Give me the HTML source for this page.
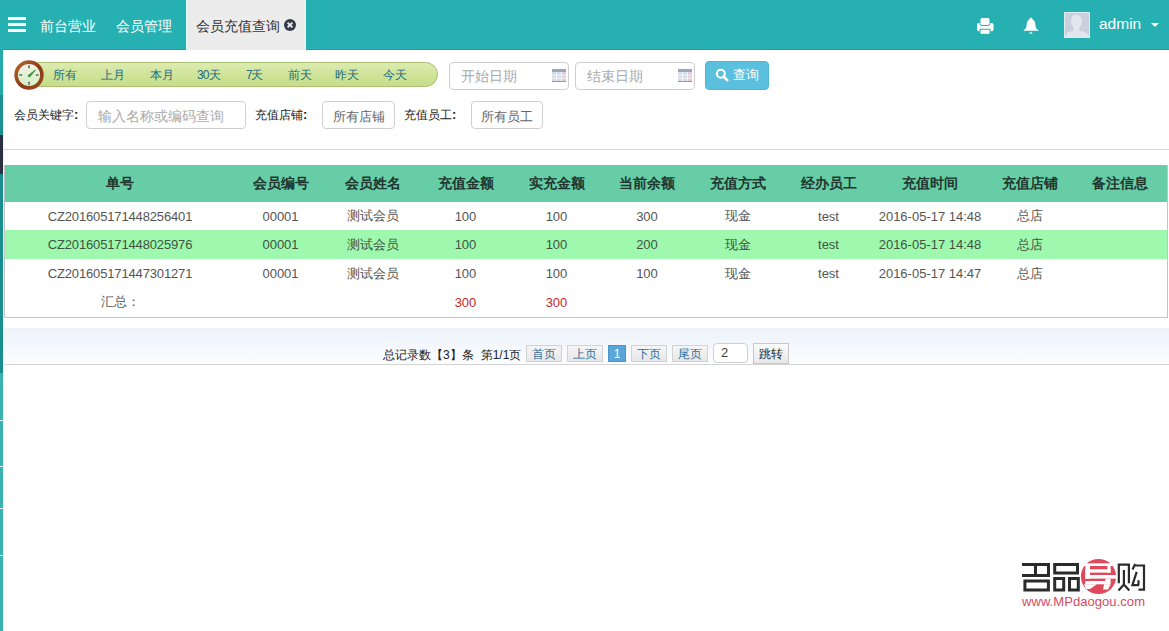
<!DOCTYPE html>
<html><head><meta charset="utf-8">
<style>
*{margin:0;padding:0;box-sizing:border-box;}
html,body{width:1169px;height:631px;overflow:hidden;background:#fff;font-family:"Liberation Sans",sans-serif;color:#333;}
.abs{position:absolute;}
#top{position:absolute;left:0;top:0;width:1169px;height:50px;background:#26b0b2;box-shadow:inset 0 -1px #20a0a2;}
.ham{position:absolute;left:8px;width:18px;height:3px;background:#fff;}
.nav{position:absolute;top:18px;font-size:14px;color:#fff;line-height:16px;white-space:nowrap;}
#tab{position:absolute;left:186px;top:0;width:120px;height:50px;background:#ececec;border-left:1px solid #dff;border-right:1px solid #dff;}
.pill{position:absolute;left:24px;top:62px;width:414px;height:25px;border:1px solid #aabd72;border-radius:13px;background:linear-gradient(#dcebb0,#cfe49a 50%,#c4de88);}
.q{position:absolute;top:68px;font-size:12px;color:#216a84;line-height:14px;white-space:nowrap;}
.inp{position:absolute;height:28px;border:1px solid #cfcfcf;border-radius:4px;background:#fff;}
.ph{position:absolute;font-size:14px;color:#aaa;line-height:16px;white-space:nowrap;}
.lbl{position:absolute;font-size:12px;color:#222;line-height:14px;white-space:nowrap;}
.btn{position:absolute;height:28px;border:1px solid #cfcfcf;border-radius:4px;background:#fff;font-size:13px;color:#666;text-align:center;line-height:29px;white-space:nowrap;}
table{position:absolute;left:5px;top:165px;width:1162px;border-collapse:separate;border-spacing:0;table-layout:fixed;}
th{height:37px;background:#66cda7;font-size:14px;font-weight:bold;color:#21362e;text-align:center;padding:0;padding-top:1px;}
td{font-size:13px;color:#555;text-align:center;padding:0;white-space:nowrap;}
tr.g td{background:#9ef9ae;color:#3f5443;}
.red{color:#c4262e;}
#pager{position:absolute;left:4px;top:328px;width:1165px;height:37px;background:linear-gradient(#eff3f7,#f0f5fc 25%,#fcfdff);border-bottom:1px solid #d4d4d4;}
.pg{position:absolute;top:345px;height:17px;border:1px solid #d2d2d2;background:linear-gradient(#f6f6f6,#e6e6e6);font-size:12px;color:#2f6e9a;line-height:16px;text-align:center;}
</style></head><body>
<div id="top">
  <div class="ham" style="top:17px"></div>
  <div class="ham" style="top:23px"></div>
  <div class="ham" style="top:29px"></div>
  <div class="nav" style="left:40px">前台营业</div>
  <div class="nav" style="left:116px">会员管理</div>
  <div id="tab"></div>
  <div class="nav" style="left:196px;color:#333">会员充值查询</div>
  <svg class="abs" style="left:284px;top:19px" width="12" height="12" viewBox="0 0 12 12"><circle cx="6" cy="6" r="6" fill="#353a48"/><path d="M3.6 3.6L8.4 8.4M8.4 3.6L3.6 8.4" stroke="#ececec" stroke-width="1.9"/></svg>
  <!-- printer -->
  <svg class="abs" style="left:977px;top:18px" width="17" height="16" viewBox="0 0 17 16">
    <rect x="0" y="5" width="16.5" height="8.2" rx="1.6" fill="#fff"/>
    <rect x="3" y="-0.5" width="10" height="8" rx="2" fill="#fff" stroke="#26b0b2" stroke-width="1"/>
    <rect x="3" y="11.3" width="10" height="5" fill="#fff" stroke="#26b0b2" stroke-width="1"/>
  </svg>
  <!-- bell -->
  <svg class="abs" style="left:1023px;top:17px" width="16" height="18" viewBox="0 0 16 18">
    <path d="M8 0.8C8.9 0.8 9.3 1.4 9.4 2.2C11.2 3 12.2 5 12.4 7.5L12.8 10.5C13 11.6 14.2 12.4 15.3 12.9V13.8H0.7V12.9C1.8 12.4 3 11.6 3.2 10.5L3.6 7.5C3.8 5 4.8 3 6.6 2.2C6.7 1.4 7.1 0.8 8 0.8Z" fill="#fff"/>
    <rect x="6.4" y="15.3" width="3" height="1.5" rx="0.7" fill="#dff6f6"/>
  </svg>
  <!-- avatar -->
  <svg class="abs" style="left:1064px;top:12px" width="26" height="26" viewBox="0 0 26 26">
    <rect x="0.5" y="0.5" width="25" height="25" fill="#c9d0dd" stroke="#dcecf0" stroke-width="1"/>
    <ellipse cx="12.5" cy="9.5" rx="5.6" ry="6.8" fill="#e2e6ef"/>
    <rect x="9.5" y="13" width="6" height="6" fill="#e2e6ef"/>
    <path d="M1.5 25V23C2.5 21 5 19.5 8 19H17C20 19.5 23 21 24.5 23V25Z" fill="#e2e6ef"/>
  </svg>
  <div class="nav" style="left:1099px;top:15px;font-size:15.5px;line-height:18px">admin</div>
  <div class="abs" style="left:1151px;top:23px;width:0;height:0;border-left:4px solid transparent;border-right:4px solid transparent;border-top:4.5px solid #fff"></div>
</div>

<!-- left sidebar strip -->
<div class="abs" style="left:0;top:49px;width:3px;height:46px;background:#29a8aa"></div>
<div class="abs" style="left:0;top:95px;width:3px;height:41px;background:#1e9093"></div>
<div class="abs" style="left:0;top:135px;width:3px;height:39px;background:#2c3142"></div>
<div class="abs" style="left:0;top:174px;width:3px;height:199px;background:#1a8d8e"></div>
<div class="abs" style="left:0;top:373px;width:3px;height:258px;background:#3cb1b1"></div>
<div class="abs" style="left:3px;top:50px;width:1px;height:581px;background:#dcf7f7"></div>
<div class="abs" style="left:0;top:420px;width:3px;height:1px;background:#d8f0f0"></div>
<div class="abs" style="left:0;top:466px;width:3px;height:1px;background:#d8f0f0"></div>
<div class="abs" style="left:0;top:508px;width:3px;height:1px;background:#d8f0f0"></div>
<div class="abs" style="left:0;top:555px;width:3px;height:1px;background:#d8f0f0"></div>

<div class="pill"></div>
<svg class="abs" style="left:12.5px;top:59px" width="32" height="32" viewBox="0 0 32 32">
<defs><linearGradient id="rg" x1="0" y1="0" x2="1" y2="1"><stop offset="0" stop-color="#b8672e"/><stop offset="0.55" stop-color="#8a3b16"/><stop offset="1" stop-color="#9c4a1e"/></linearGradient>
<linearGradient id="fg" x1="0" y1="0" x2="0" y2="1"><stop offset="0" stop-color="#f2f5ea"/><stop offset="1" stop-color="#d5eec4"/></linearGradient></defs>
<circle cx="16" cy="16" r="12.9" fill="url(#fg)" stroke="url(#rg)" stroke-width="3.6"/>
<path d="M16 6.2v3M16 22.8v3M6.2 16h3M22.8 16h3" stroke="#2a2a2a" stroke-width="1.1"/>
<path d="M14.8 16.8L22.4 11L16.6 18Z" fill="#3a9a3a" stroke="#3a9a3a" stroke-width="1"/>
</svg>
<div class="q" style="left:53px">所有</div>
<div class="q" style="left:101px">上月</div>
<div class="q" style="left:150px">本月</div>
<div class="q" style="left:197px"><span style="letter-spacing:-1px">3</span>0天</div>
<div class="q" style="left:246px"><span style="letter-spacing:-1.5px">7</span>天</div>
<div class="q" style="left:288px">前天</div>
<div class="q" style="left:335px">昨天</div>
<div class="q" style="left:383px">今天</div>

<div class="inp" style="left:449px;top:62px;width:120px;height:28px"></div>
<div class="ph" style="left:461px;top:68px">开始日期</div>
<div class="inp" style="left:575px;top:62px;width:120px;height:28px"></div>
<div class="ph" style="left:587px;top:68px">结束日期</div>
<svg class="abs" style="left:552px;top:69px" width="14" height="13" viewBox="0 0 14 13"><rect x="0" y="0" width="14" height="13" fill="#d4dce8"/><rect x="0" y="0" width="14" height="3" fill="#9aa8bc"/><rect x="9.5" y="3" width="4.5" height="9" fill="#e4cbd6"/><path d="M0 6.2H14M0 9.2H14M4.5 3V12M9.5 3V12" stroke="#f4f6fa" stroke-width="1"/><rect x="0" y="12" width="14" height="1" fill="#8f99a8"/></svg>
<svg class="abs" style="left:678px;top:69px" width="14" height="13" viewBox="0 0 14 13"><rect x="0" y="0" width="14" height="13" fill="#d4dce8"/><rect x="0" y="0" width="14" height="3" fill="#9aa8bc"/><rect x="9.5" y="3" width="4.5" height="9" fill="#e4cbd6"/><path d="M0 6.2H14M0 9.2H14M4.5 3V12M9.5 3V12" stroke="#f4f6fa" stroke-width="1"/><rect x="0" y="12" width="14" height="1" fill="#8f99a8"/></svg>
<div class="abs" style="left:705px;top:61px;width:64px;height:29px;background:#5bc0de;border:1px solid #4fb6d6;border-radius:4px"></div>
<svg class="abs" style="left:715px;top:68px" width="14" height="14" viewBox="0 0 14 14"><circle cx="5.8" cy="5.8" r="4" fill="none" stroke="#fff" stroke-width="2.1"/><path d="M8.6 8.6L12.2 12.2" stroke="#fff" stroke-width="2.6" stroke-linecap="round"/></svg>
<div class="abs" style="left:733px;top:67px;font-size:13px;line-height:15px;color:#fff">查询</div>

<div class="lbl" style="left:14px;top:108px">会员关键字<b style="font-size:13px">:</b></div>
<div class="inp" style="left:86px;top:101px;width:160px"></div>
<div class="ph" style="left:98px;top:108px">输入名称或编码查询</div>
<div class="lbl" style="left:255px;top:108px">充值店铺<b style="font-size:13px">:</b></div>
<div class="btn" style="left:322px;top:101px;width:73px">所有店铺</div>
<div class="lbl" style="left:404px;top:108px">充值员工<b style="font-size:13px">:</b></div>
<div class="btn" style="left:471px;top:101px;width:72px">所有员工</div>

<div class="abs" style="left:4px;top:149px;width:1165px;height:1px;background:#d6d6d6"></div>

<div class="abs" style="left:4px;top:165px;width:1164px;height:153px;border:1px solid #c4c4c4;border-top:none"></div>
<table>
<colgroup><col style="width:230px"><col style="width:91px"><col style="width:93px"><col style="width:93px"><col style="width:89px"><col style="width:92px"><col style="width:90px"><col style="width:91px"><col style="width:112px"><col style="width:87px"><col></colgroup>
<tr><th>单号</th><th>会员编号</th><th>会员姓名</th><th>充值金额</th><th>实充金额</th><th>当前余额</th><th>充值方式</th><th>经办员工</th><th>充值时间</th><th>充值店铺</th><th>备注信息</th></tr>
<tr style="height:28px"><td style="letter-spacing:-0.15px">CZ201605171448256401</td><td>00001</td><td>测试会员</td><td>100</td><td>100</td><td>300</td><td>现金</td><td>test</td><td>2016-05-17 14:48</td><td>总店</td><td></td></tr>
<tr class="g" style="height:29px"><td style="letter-spacing:-0.15px">CZ201605171448025976</td><td>00001</td><td>测试会员</td><td>100</td><td>100</td><td>200</td><td>现金</td><td>test</td><td>2016-05-17 14:48</td><td>总店</td><td></td></tr>
<tr style="height:29px"><td style="letter-spacing:-0.15px">CZ201605171447301271</td><td>00001</td><td>测试会员</td><td>100</td><td>100</td><td>100</td><td>现金</td><td>test</td><td>2016-05-17 14:47</td><td>总店</td><td></td></tr>
<tr style="height:28px"><td>汇总：</td><td></td><td></td><td class="red">300</td><td class="red">300</td><td></td><td></td><td></td><td></td><td></td><td></td></tr>
</table>

<div id="pager"></div>
<div class="abs" style="left:383px;top:348px;font-size:12px;color:#222;line-height:14px;white-space:nowrap">总记录数【3】条<span style="display:inline-block;width:7px"></span>第1/1页</div>
<div class="pg" style="left:526px;width:36px">首页</div>
<div class="pg" style="left:567px;width:36px">上页</div>
<div class="pg" style="left:608px;width:18px;background:#5aa6da;color:#fff;border-color:#4a96ca">1</div>
<div class="pg" style="left:631px;width:36px">下页</div>
<div class="pg" style="left:672px;width:36px">尾页</div>
<div class="abs" style="left:713px;top:343px;width:35px;height:20px;border:1px solid #cfcfcf;border-radius:4px;background:#fff;font-size:13px;line-height:18px;padding-left:7px;color:#444">2</div>
<div class="abs" style="left:753px;top:343px;width:36px;height:21px;border:1px solid #c8c8c8;background:linear-gradient(#fafafa,#e8e8e8);font-size:12px;line-height:20px;text-align:center;color:#222">跳转</div>

<!-- logo -->
<svg class="abs" style="left:1018px;top:554px" width="132" height="56" viewBox="1018 554 132 56">
  <g fill="none" stroke="#2b2b2b" stroke-width="3">
    <path d="M1022 564.5H1050M1048.5 564.5V575.5M1035.5 566V575.5M1022 575.5H1050"/>
    <rect x="1024.9" y="581" width="23.5" height="9"/>
    <rect x="1054.7" y="564.5" width="22.8" height="8.5"/>
    <rect x="1054.7" y="578.5" width="9" height="11.5"/>
    <rect x="1069.5" y="578.5" width="8.8" height="11.5"/>
  </g>
  <circle cx="1098.5" cy="576.5" r="17.6" fill="#e0485b"/>
  <g fill="#fff">
    <rect x="1080" y="563.3" width="38" height="2.7"/>
    <rect x="1085.3" y="566" width="4.7" height="12.6"/>
    <rect x="1085.3" y="569.3" width="25.3" height="3.3"/>
    <rect x="1107.3" y="566" width="3.3" height="6.6"/>
    <rect x="1085.3" y="575" width="32" height="3.6"/>
    <rect x="1105.3" y="578.6" width="5.3" height="2.4"/>
    <rect x="1085.3" y="581" width="25.3" height="3.3"/>
    <path d="M1084 584.3H1097L1090 589H1086Z"/>
    <path d="M1104 584.3H1110.6L1108 589.5H1103Z"/>
    <path d="M1088 591H1109V595H1088Z" fill="none"/>
  </g>
  <g fill="none" stroke="#2b2b2b" stroke-width="2.2">
    <path d="M1118.8 583.3V564.6H1128.9V583.3"/>
    <path d="M1123.9 570V584.5L1118.5 590.5M1124.6 585.2L1129.3 590.5"/>
    <path d="M1135.2 564L1132.5 569.4M1134.3 565.5H1144V589.7H1138.5"/>
    <path d="M1136.7 571.9L1132.4 585.1H1139.1M1138.5 580.3V585.1"/>
  </g>
  <text x="1022" y="606.3" font-family="Liberation Sans, sans-serif" font-size="13" fill="#d84a5e" textLength="123">www.MPdaogou.com</text>
</svg>

</body></html>
